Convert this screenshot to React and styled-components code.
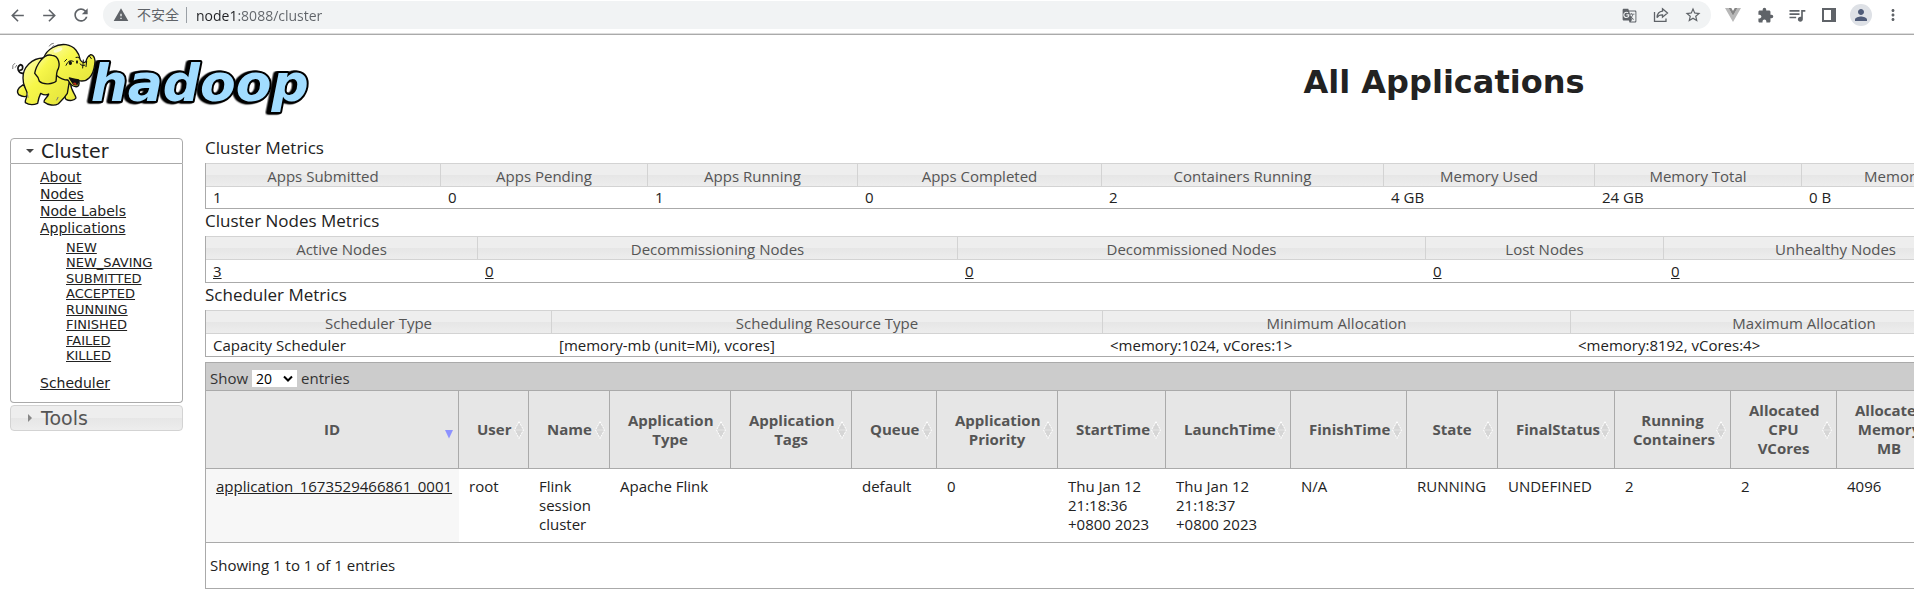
import React from "react";
import styled, { createGlobalStyle, css } from "styled-components";
import {
  MdArrowBack,
  MdArrowForward,
  MdExtension,
  MdGTranslate,
  MdMoreVert,
  MdPerson,
  MdQueueMusic,
  MdRefresh,
  MdStarBorder,
  MdWarning,
} from "react-icons/md";

const uiFont = `"Open Sans", "Noto Sans CJK SC", sans-serif`;
const navFont = `"DejaVu Sans", sans-serif`;
const line = "#aaaaaa";
const softLine = "#d3d3d3";
const glass = "linear-gradient(#eeeeee 0 50%, #e6e6e6 50%, #ededed)";

const GlobalStyle = createGlobalStyle`
  * { box-sizing: border-box; }
  body {
    margin: 0;
    background: #ffffff;
    color: #222222;
    font-family: ${uiFont};
    font-size: 15px;
    line-height: 19px;
  }
  button, input, select { font: inherit; color: inherit; }
  a { color: inherit; }
`;

/* ---------- browser toolbar ---------- */

const Toolbar = styled.header`
  display: flex;
  align-items: flex-start;
  height: 35px;
  padding: 1px 10px 0 6px;
  border-bottom: 1px solid ${line};
  box-shadow: inset 0 -1px 0 #dddddd;
  color: #5f6368;
`;

const NavButtons = styled.nav`
  display: flex;
  gap: 10px;
  margin-right: 11px;
`;

const IconButton = styled.button`
  display: flex;
  align-items: center;
  justify-content: center;
  width: 22px;
  height: 28px;
  padding: 0;
  border: 0;
  background: none;
`;

const Omnibox = styled.div`
  display: flex;
  flex: 1;
  align-items: center;
  height: 28px;
  padding: 0 7px 0 10px;
  border-radius: 14px;
  background: #f1f3f4;
`;

const SecurityChip = styled.button`
  display: flex;
  align-items: center;
  gap: 8px;
  padding: 0 7px 0 0;
  border: 0;
  border-right: 1px solid #9aa0a6;
  background: none;
  font-size: 14px;
  line-height: 16px;
`;

/* The host name is darker than the rest of the address. */
const Address = styled.input`
  flex: 1;
  min-width: 0;
  height: 24px;
  padding: 0;
  margin-left: 9px;
  border: 0;
  background: linear-gradient(90deg, #202124 42px, #5f6368 42px);
  background-clip: text;
  color: transparent;
  font-size: 14px;
`;

const Actions = styled.div`
  display: flex;
  gap: 10px;
`;

const Extensions = styled.div`
  display: flex;
  align-items: center;
  gap: 10px;
  margin-left: 11px;
`;

const Avatar = styled.button`
  display: flex;
  align-items: center;
  justify-content: center;
  width: 22px;
  height: 22px;
  padding: 0;
  border: 0;
  border-radius: 50%;
  background: #dee1e6;
  color: #4f5b78;
`;

/* ---------- page frame ---------- */

const Viewport = styled.div`
  overflow-x: auto;
  scrollbar-width: none;
`;

const Page = styled.div`
  display: grid;
  grid-template-columns: 205px minmax(2478px, 1fr);
`;

const LogoLink = styled.a`
  height: 101px;
  padding: 3px 0 0 8px;
`;

const LogoText = styled.text`
  font: italic bold 156px ${navFont};
  fill: #a1dcff;
  stroke: #000000;
  stroke-width: 12px;
  stroke-linejoin: round;
  paint-order: stroke;
  filter: drop-shadow(-5px 1px 0 #000000) drop-shadow(-5px 1px 0 #000000);
`;

const Title = styled.h1`
  margin: 0;
  padding-top: 27px;
  text-align: center;
  font: bold 32px/40px ${navFont};
`;

const Sidebar = styled.aside`
  display: flex;
  flex-direction: column;
  gap: 2px;
  padding: 2px 22px 0 10px;
  font-family: ${navFont};
`;

const SectionButton = styled.button`
  display: flex;
  align-items: center;
  gap: 6px;
  width: 100%;
  height: 26px;
  padding: 0 0 0 14px;
  border: 1px solid ${(p) => (p.$open ? line : softLine)};
  border-radius: ${(p) => (p.$open ? "4px 4px 0 0" : "4px")};
  background: ${(p) => (p.$open ? "#ffffff" : glass)};
  color: ${(p) => (p.$open ? "#222222" : "#555555")};
  font-size: 19px;
  line-height: 24px;
`;

const SectionBody = styled.div`
  padding: 5px 0 10px 29px;
  border: 1px solid ${line};
  border-top: 0;
  border-radius: 0 0 4px 4px;
`;

const LinkList = styled.ul`
  margin: 0;
  padding: 0;
  list-style: none;
  font-size: 14px;
  line-height: 17px;
`;

const SubList = styled(LinkList)`
  padding: 3px 0 11px 26px;
  font-size: 13px;
  line-height: 15px;
`;

const SubItem = styled.li`
  &:nth-child(even) { padding-bottom: 1px; }
`;

/* ---------- metric tables ---------- */

const MetricHeading = styled.h2`
  margin: 0;
  padding-bottom: 4px;
  font-size: 17px;
  font-weight: normal;
  line-height: 23px;
`;

const MetricTable = styled.table`
  width: 100%;
  table-layout: fixed;
  border-collapse: separate;
  border-spacing: 0;
  border: 1px solid ${line};
  border-top: 0;

  th {
    height: 24px;
    padding: 2px 0 0;
    border: solid ${softLine};
    border-width: 1px 1px 1px 0;
    background: ${glass};
    color: #555555;
    font-weight: normal;
  }
  td {
    height: ${(p) => p.$rowHeight}px;
    padding: 0 7px;
  }
`;

/* ---------- applications table ---------- */

const AppsPanel = styled.section`
  margin-top: 5px;
  border: 1px solid ${line};
`;

const LengthBar = styled.div`
  display: flex;
  align-items: center;
  height: 27px;
  padding: 4px 4px 0;
  background: #cccccc;
  color: #333333;
`;

const LengthLabel = styled.label`
  display: flex;
  align-items: center;
  gap: 4px;
`;

const SelectBox = styled.span`
  position: relative;
  display: flex;

  svg {
    position: absolute;
    right: 4px;
    top: 5px;
    pointer-events: none;
  }
`;

const LengthSelect = styled.select`
  appearance: none;
  width: 45px;
  height: 17px;
  padding: 0 4px;
  border: 0;
  border-radius: 0;
  background: #ffffff;
  color: #000000;
  font-size: 14px;
  line-height: 17px;
`;

const AppsTable = styled.table`
  width: 100%;
  table-layout: fixed;
  border-collapse: separate;
  border-spacing: 0;

  td {
    padding: 8px 12px 8px 10px;
    border-bottom: 1px solid ${line};
    vertical-align: top;
  }
  td:first-child { background: #f7f7f7; }
`;

const AppsHead = styled.th`
  position: relative;
  height: 79px;
  padding: 0;
  border: solid ${line};
  border-width: 1px 1px 1px 0;
  background: #e6e6e6;
  color: #555555;
`;

const SortButton = styled.button`
  width: 100%;
  padding: 0 18px;
  border: 0;
  background: none;
  font-weight: bold;
  white-space: pre-line;
`;

const SortMark = styled.svg`
  position: absolute;
  right: 4px;
  top: 50%;
  margin-top: -9px;
  ${(p) => p.$active && css`margin-top: 0;`}
`;

const Summary = styled.p`
  margin: 0;
  padding: 13px 4px;
`;

const HadoopLogo = () => (
  <svg width="310" height="80" viewBox="0 0 930 240" role="img" aria-label="hadoop">
    <defs>
      <linearGradient id="hide" x1="0" y1="0" x2="1" y2="1">
        <stop offset="0.1" stopColor="#fbfb9a" />
        <stop offset="0.4" stopColor="#f7f74a" />
        <stop offset="1" stopColor="#e2e23a" />
      </linearGradient>
    </defs>
    <LogoText x="248" y="189">hadoop</LogoText>
    <g fill="url(#hide)" stroke="#111" strokeWidth="4" strokeLinejoin="round" strokeLinecap="round">
      <path d="M48 106C30 108 24 88 37 80C48 82 45 98 36 96" fill="none" stroke="#111" strokeWidth="5" />
      <path d="M46 140C30 150 24 160 32 170C44 178 58 178 64 168Z" />
      <path d="M170 144C172 160 166 176 174 184C184 190 200 188 204 180C202 168 188 158 188 136Z" />
      <path d="M106 60C72 60 44 88 45 120C44 142 54 152 57 164C60 176 50 184 52 194C64 202 80 200 89 196C91 184 94 174 98 166C108 172 116 172 122 168C120 178 106 184 108 192C120 202 140 204 150 198C158 190 168 182 178 166L184 130Z" />
      <path d="M108 58C116 34 148 16 174 20C200 24 214 45 217 66C222 74 230 76 234 70C236 62 240 54 248 50C258 50 264 66 260 80C256 114 238 134 212 128C216 138 212 148 202 146C190 144 184 134 180 126C160 126 130 110 108 58Z" />
      <path d="M132 52C106 44 84 84 80 106C86 112 92 118 94 130C106 142 136 138 144 130C146 118 144 108 148 98C158 82 154 54 132 52Z" />
      <path d="M184 120C196 124 204 124 212 126C212 140 204 144 196 138Z" fill="#111" />
    </g>
    <path d="M194 136Q204 130 206 140Q200 144 194 136Z" fill="#b22d16" />
    <g fill="none" stroke="#111" strokeWidth="3" strokeLinecap="round">
      <path d="M174 82Q182 62 196 70M170 70L176 64M204 58Q210 56 214 60M216 78Q222 86 230 82M226 66L224 90M236 70L234 86M244 54L250 62" />
      <path d="M124 24Q128 16 136 16M132 28L138 22M14 92Q12 80 20 76M22 88L26 82M58 166L60 178M150 178L146 186" stroke="#777" />
    </g>
    <ellipse cx="187" cy="75" rx="5" ry="6" fill="#111" />
    <ellipse cx="207" cy="72" rx="3" ry="5" fill="#111" />
    <ellipse cx="150" cy="36" rx="14" ry="6" fill="#fff" opacity="0.6" transform="rotate(-22 150 36)" />
  </svg>
);

const ShareIcon = () => (
  <svg width="16" height="16" viewBox="0 0 16 16" fill="none" stroke="currentColor" strokeWidth="1.3">
    <path d="M1.500 5v9.300h11.500V11.500M9.500 1.800L14.500 6L9.500 10.200V7.900C7 7.800 5.200 8.600 4 10.600C4.200 7.300 6 4.600 9.500 4.200Z" />
  </svg>
);

const VueIcon = () => (
  <svg width="16" height="14" viewBox="0 0 16 14">
    <path d="M0 0h3.500L8 7.800L12.500 0H16L8 14Z" fill="#b8b8b8" />
    <path d="M3.500 0H6.300L8 3L9.700 0h2.800L8 7.800Z" fill="#858585" />
  </svg>
);

const PanelIcon = () => (
  <svg width="14" height="14" viewBox="0 0 14 14">
    <path d="M0 0h14v14H0ZM2 2v10h7V2Z" fill="currentColor" fillRule="evenodd" />
  </svg>
);

const Triangle = ({ open }) => (
  <svg width="10" height="10" viewBox="0 0 10 10" aria-hidden="true">
    <path d={open ? "M1 3h8L5 7Z" : "M3 1v8L7 5Z"} fill={open ? "#454545" : "#888888"} />
  </svg>
);

const SortIcon = ({ active }) =>
  active ? (
    <SortMark $active width="10" height="9" viewBox="0 0 10 9" aria-hidden="true">
      <path d="M1 0h8L5 8.500Z" fill="#8d92ff" />
    </SortMark>
  ) : (
    <SortMark width="10" height="18" viewBox="0 0 10 18" aria-hidden="true">
      <path d="M5 1.500L9 8.500H1ZM5 16.500L9 9.500H1Z" fill="#d6d6d6" />
      <path d="M5 0.500L9.500 9L5 17.500L0.500 9Z" fill="none" stroke="#fff" strokeDasharray="2 1" />
    </SortMark>
  );

const clusterMetrics = [
  ["Apps Submitted", "1", 235],
  ["Apps Pending", "0", 207],
  ["Apps Running", "1", 210],
  ["Apps Completed", "0", 244],
  ["Containers Running", "2", 282],
  ["Memory Used", "4 GB", 211],
  ["Memory Total", "24 GB", 207],
  ["Memory Reserved", "0 B", 252],
];

const nodeMetrics = [
  ["Active Nodes", "3", 272],
  ["Decommissioning Nodes", "0", 480],
  ["Decommissioned Nodes", "0", 468],
  ["Lost Nodes", "0", 238],
  ["Unhealthy Nodes", "0", 344],
];

const schedulerMetrics = [
  ["Scheduler Type", "Capacity Scheduler", 346],
  ["Scheduling Resource Type", "[memory-mb (unit=Mi), vcores]", 551],
  ["Minimum Allocation", "<memory:1024, vCores:1>", 468],
  ["Maximum Allocation", "<memory:8192, vCores:4>", 467],
];

const appColumns = [
  ["ID", "application_1673529466861_0001", 253],
  ["User", "root", 70],
  ["Name", "Flink session cluster", 81],
  ["Application\nType", "Apache Flink", 121],
  ["Application\nTags", "", 121],
  ["Queue", "default", 85],
  ["Application\nPriority", "0", 121],
  ["StartTime", "Thu Jan 12 21:18:36 +0800 2023", 108],
  ["LaunchTime", "Thu Jan 12 21:18:37 +0800 2023", 125],
  ["FinishTime", "N/A", 116],
  ["State", "RUNNING", 91],
  ["FinalStatus", "UNDEFINED", 117],
  ["Running\nContainers", "2", 116],
  ["Allocated\nCPU\nVCores", "2", 106],
  ["Allocated\nMemory\nMB", "4096", 105],
];

const Columns = ({ items }) => (
  <colgroup>
    {items.map(([name, , width]) => (
      <col key={name} width={width} />
    ))}
    <col />
  </colgroup>
);

const Metrics = ({ title, items, linked, rowHeight }) => (
  <section>
    <MetricHeading>{title}</MetricHeading>
    <MetricTable $rowHeight={rowHeight}>
      <Columns items={items} />
      <thead>
        <tr>
          {items.map(([name]) => <th key={name} scope="col">{name}</th>)}
          <th aria-hidden="true" />
        </tr>
      </thead>
      <tbody>
        <tr>
          {items.map(([name, value]) => (
            <td key={name}>{linked ? <a href="#nodes">{value}</a> : value}</td>
          ))}
          <td />
        </tr>
      </tbody>
    </MetricTable>
  </section>
);

const states = ["NEW", "NEW_SAVING", "SUBMITTED", "ACCEPTED", "RUNNING", "FINISHED", "FAILED", "KILLED"];

export default function App() {
  return (
    <>
      <GlobalStyle />
      <Toolbar>
        <NavButtons aria-label="History">
          <IconButton aria-label="Back"><MdArrowBack size={19} /></IconButton>
          <IconButton aria-label="Forward"><MdArrowForward size={19} /></IconButton>
          <IconButton aria-label="Reload"><MdRefresh size={20} /></IconButton>
        </NavButtons>
        <Omnibox>
          <SecurityChip><MdWarning size={16} />不安全</SecurityChip>
          <Address aria-label="Address" defaultValue="node1:8088/cluster" />
          <Actions>
            <IconButton aria-label="Translate"><MdGTranslate size={15} /></IconButton>
            <IconButton aria-label="Share"><ShareIcon /></IconButton>
            <IconButton aria-label="Bookmark"><MdStarBorder size={18} /></IconButton>
          </Actions>
        </Omnibox>
        <Extensions>
          <IconButton aria-label="Vue devtools"><VueIcon /></IconButton>
          <IconButton aria-label="Extensions"><MdExtension size={17} /></IconButton>
          <IconButton aria-label="Media"><MdQueueMusic size={20} /></IconButton>
          <IconButton aria-label="Side panel"><PanelIcon /></IconButton>
          <Avatar aria-label="Profile"><MdPerson size={18} /></Avatar>
          <IconButton aria-label="Menu"><MdMoreVert size={18} /></IconButton>
        </Extensions>
      </Toolbar>
      <Viewport>
        <Page>
          <LogoLink href="#home"><HadoopLogo /></LogoLink>
          <Title>All Applications</Title>
          <Sidebar>
            <div>
              <SectionButton $open aria-expanded="true"><Triangle open />Cluster</SectionButton>
              <SectionBody>
                <LinkList>
                  <li><a href="#about">About</a></li>
                  <li><a href="#nodes">Nodes</a></li>
                  <li><a href="#labels">Node Labels</a></li>
                  <li>
                    <a href="#apps">Applications</a>
                    <SubList>
                      {states.map((s) => (
                        <SubItem key={s}><a href={`#apps/${s}`}>{s}</a></SubItem>
                      ))}
                    </SubList>
                  </li>
                  <li><a href="#scheduler">Scheduler</a></li>
                </LinkList>
              </SectionBody>
            </div>
            <SectionButton aria-expanded="false"><Triangle />Tools</SectionButton>
          </Sidebar>
          <main>
            <Metrics title="Cluster Metrics" items={clusterMetrics} rowHeight={21} />
            <Metrics title="Cluster Nodes Metrics" items={nodeMetrics} linked rowHeight={22} />
            <Metrics title="Scheduler Metrics" items={schedulerMetrics} rowHeight={22} />
            <AppsPanel>
              <LengthBar>
                <LengthLabel>
                  Show
                  <SelectBox>
                    <LengthSelect defaultValue="20">
                      <option>20</option>
                      <option>50</option>
                    </LengthSelect>
                    <svg width="10" height="8" viewBox="0 0 10 8" fill="none" stroke="#000" strokeWidth="2">
                      <path d="M1 1.500L5 5.500L9 1.500" />
                    </svg>
                  </SelectBox>
                  entries
                </LengthLabel>
              </LengthBar>
              <AppsTable>
                <Columns items={appColumns} />
                <thead>
                  <tr>
                    {appColumns.map(([name], i) => (
                      <AppsHead key={name} scope="col">
                        <SortButton>{name}</SortButton>
                        <SortIcon active={i === 0} />
                      </AppsHead>
                    ))}
                    <AppsHead aria-hidden="true" />
                  </tr>
                </thead>
                <tbody>
                  <tr>
                    {appColumns.map(([name, value], i) => (
                      <td key={name}>{i === 0 ? <a href="#app">{value}</a> : value}</td>
                    ))}
                    <td />
                  </tr>
                </tbody>
              </AppsTable>
              <Summary>Showing 1 to 1 of 1 entries</Summary>
            </AppsPanel>
          </main>
        </Page>
      </Viewport>
    </>
  );
}
